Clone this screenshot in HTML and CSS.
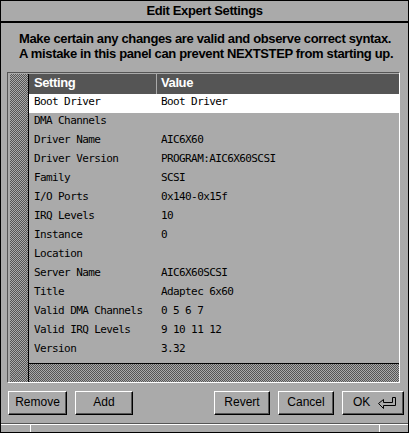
FILE: index.html
```html
<!DOCTYPE html>
<html>
<head>
<meta charset="utf-8">
<link rel="stylesheet" href="styles.css">
</head>
<body>
<div class="window">
  <div class="titlebar">Edit Expert Settings</div>
  <div class="message">
    <div>Make certain any changes are valid and observe correct syntax.</div>
    <div>A mistake in this panel can prevent NEXTSTEP from starting up.</div>
  </div>
  <div class="frame">
    <div class="vscroll"></div>
    <div class="content">
      <div class="header">
        <div class="hcell first">Setting</div>
        <div class="hcell">Value</div>
      </div>
      <div class="list">
        <div class="row selected"><span>Boot Driver</span><span>Boot Driver</span></div>
        <div class="row"><span>DMA Channels</span><span></span></div>
        <div class="row"><span>Driver Name</span><span>AIC6X60</span></div>
        <div class="row"><span>Driver Version</span><span>PROGRAM:AIC6X60SCSI</span></div>
        <div class="row"><span>Family</span><span>SCSI</span></div>
        <div class="row"><span>I/O Ports</span><span>0x140-0x15f</span></div>
        <div class="row"><span>IRQ Levels</span><span>10</span></div>
        <div class="row"><span>Instance</span><span>0</span></div>
        <div class="row"><span>Location</span><span></span></div>
        <div class="row"><span>Server Name</span><span>AIC6X60SCSI</span></div>
        <div class="row"><span>Title</span><span>Adaptec 6x60</span></div>
        <div class="row"><span>Valid DMA Channels</span><span>0 5 6 7</span></div>
        <div class="row"><span>Valid IRQ Levels</span><span>9 10 11 12</span></div>
        <div class="row"><span>Version</span><span>3.32</span></div>
      </div>
      <div class="hscroll"></div>
    </div>
  </div>
  <div class="buttons">
    <div class="btn w-remove">Remove</div>
    <div class="btn w-add">Add</div>
    <div class="spacer"></div>
    <div class="btn w-revert">Revert</div>
    <div class="btn w-cancel">Cancel</div>
    <div class="btn w-ok ok"><span>OK</span>
      <svg class="ret" width="18" height="12" viewBox="0 0 18 12"><path d="M0.5 6.5 L5.5 2.5 L5.5 5.5 L14.5 5.5 L14.5 0.5 L17.5 0.5 L17.5 8.5 L5.5 8.5 L5.5 11.5 Z" fill="none" stroke="#000" stroke-width="1"/></svg>
    </div>
  </div>
  <div class="resizebar">
    <div class="seg-left"></div>
    <div class="seg-mid"></div>
    <div class="seg-right"></div>
  </div>
</div>
</body>
</html>
```

FILE: styles.css
```css
* { box-sizing: border-box; }
html, body { margin: 0; padding: 0; }
body { background: #aaaaaa; width: 409px; height: 433px; overflow: hidden; }

.window {
  width: 409px;
  height: 433px;
  border: 1px solid #000;
  background: #aaaaaa;
  display: flex;
  flex-direction: column;
  font-family: "Liberation Sans", Arial, sans-serif;
  color: #000;
}

.titlebar {
  height: 22px;
  border-bottom: 2px solid #000;
  text-align: center;
  font-weight: bold;
  font-size: 13px;
  letter-spacing: -0.37px;
  line-height: 20px;
  flex: none;
}

.message {
  margin-top: 8px;
  padding-left: 18px;
  height: 30px;
  font-weight: bold;
  font-size: 13px;
  letter-spacing: -0.35px;
  line-height: 15px;
  white-space: nowrap;
  flex: none;
}

.frame {
  margin-top: 11px;
  margin-left: 6px;
  width: 393px;
  height: 311px;
  border-style: solid;
  border-width: 1px;
  border-color: #555555 #ffffff #ffffff #555555;
  padding: 1px 0 0 2px;
  display: flex;
  flex: none;
}

.stipple, .vscroll, .hscroll {
  background-image: conic-gradient(#555555 25%, #aaaaaa 0 50%, #555555 0 75%, #aaaaaa 0);
  background-size: 2px 2px;
}

.vscroll {
  width: 19px;
  border-right: 1px solid #000;
  flex: none;
}

.content {
  flex: 1;
  display: flex;
  flex-direction: column;
}

.header {
  height: 20px;
  background: #555555;
  color: #fff;
  display: grid;
  grid-template-columns: 128px 1fr;
  font-weight: bold;
  font-size: 13px;
  letter-spacing: -0.4px;
  line-height: 18px;
  flex: none;
}
.hcell { padding-left: 4px; }
.hcell.first { padding-left: 5px; border-right: 1px solid #aaaaaa; }

.list { flex: 1; }

.row {
  height: 19px;
  display: grid;
  grid-template-columns: 128px 1fr;
  font-family: "DejaVu Sans Mono", "Liberation Mono", monospace;
  font-size: 11px;
  letter-spacing: -0.6px;
  line-height: 15px;
  white-space: nowrap;
}
.row span:first-child { padding-left: 5px; }
.row span:last-child { padding-left: 4px; }
.row.selected { background: #ffffff; }

.hscroll {
  height: 19px;
  border-top: 1px solid #000;
  flex: none;
}

.buttons {
  margin-top: 8px;
  height: 24px;
  display: flex;
  gap: 8px;
  padding: 0 4px 0 7px;
  flex: none;
}
.spacer { flex: 1; }

.btn {
  height: 24px;
  border-style: solid;
  border-width: 1px;
  border-color: #ffffff #000000 #000000 #ffffff;
  box-shadow: inset -1px -1px 0 #555555;
  font-size: 12px;
  line-height: 20px;
  padding-bottom: 2px;
  text-align: center;
}
.w-remove { width: 59px; }
.w-add { width: 58px; }
.w-revert { width: 56px; }
.w-cancel { width: 56px; }
.w-ok { width: 62px; }
.ok {
  display: flex;
  align-items: center;
  justify-content: space-between;
  padding: 0 7px 2px 10px;
}
.ret { display: block; margin-top: 1px; }

.resizebar {
  margin-top: auto;
  height: 9px;
  border-top: 1px solid #555555;
  display: flex;
  flex: none;
}
.seg-left { width: 29px; border-top: 1px solid #fff; }
.seg-mid { flex: 1; border-top: 1px solid #fff; border-left: 1px solid #fff; }
.seg-right { width: 29px; border-top: 1px solid #fff; border-left: 1px solid #fff; }
```
